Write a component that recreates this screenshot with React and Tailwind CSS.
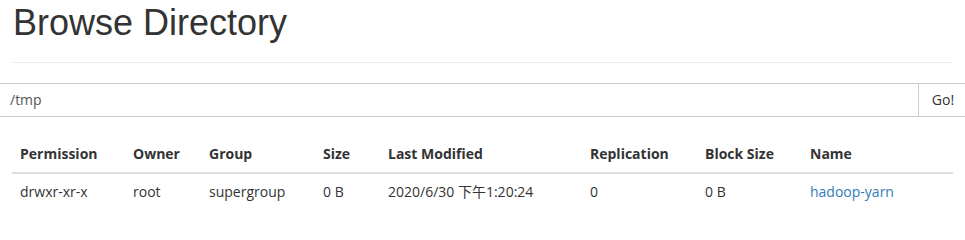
import React from 'react'

const cols = [
  { label: 'Permission', w: 'w-[113px]' },
  { label: 'Owner', w: 'w-[76px]' },
  { label: 'Group', w: 'w-[114px]' },
  { label: 'Size', w: 'w-[65px]' },
  { label: 'Last Modified', w: 'w-[202px]' },
  { label: 'Replication', w: 'w-[115px]' },
  { label: 'Block Size', w: 'w-[105px]' },
  { label: 'Name', w: 'w-[151px]' },
]

const row = ['drwxr-xr-x', 'root', 'supergroup', '0 B', '2020/6/30 下午1:20:24', '0', '0 B']

const App = () => {
  return (
    <div className="w-[965px] h-[209px] overflow-hidden bg-white text-[#333]">
      <div className="px-[12px]">
        <h1 className="mt-[3px] pl-[1px] text-[36px] leading-[1.1] font-['Liberation_Sans',Arial,sans-serif] font-normal text-[#333]">
          Browse Directory
        </h1>
        <hr className="mt-[19px] border-t border-[#eee]" />
      </div>

      <div className="mt-[20px] flex h-[34px] font-['Open_Sans','Noto_Sans_CJK_SC',sans-serif] text-[14px]">
        <input
          type="text"
          defaultValue="/tmp"
          className="flex-1 h-full px-[10px] border-y border-[#ccc] text-[#555] outline-none"
        />
        <button className="w-[47px] h-full border border-r-0 border-[#ccc] bg-white text-[#333] pl-[2px]">
          Go!
        </button>
      </div>

      <div className="px-[12px] mt-[19px]">
        <table className="w-full table-fixed border-collapse font-['Open_Sans','Noto_Sans_CJK_SC',sans-serif] text-[14px] leading-[20px]">
          <thead>
            <tr>
              {cols.map((c) => (
                <th key={c.label} className={`${c.w} p-[8px] text-left font-bold border-b-2 border-[#ddd]`}>
                  {c.label}
                </th>
              ))}
            </tr>
          </thead>
          <tbody>
            <tr>
              {row.map((v, i) => (
                <td key={i} className="p-[8px] whitespace-nowrap">{v}</td>
              ))}
              <td className="p-[8px]">
                <a href="#" className="text-[#337ab7]">hadoop-yarn</a>
              </td>
            </tr>
          </tbody>
        </table>
      </div>
    </div>
  )
}

export default App
